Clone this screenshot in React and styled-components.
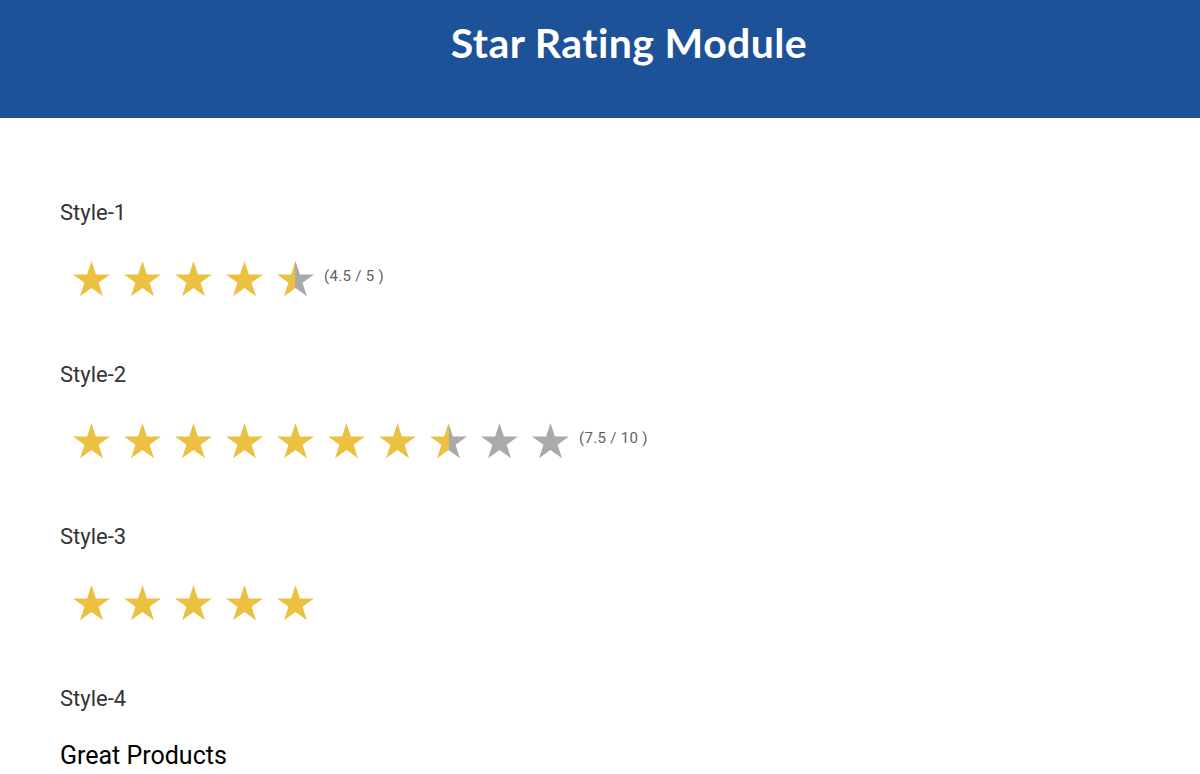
import React, { useId } from 'react';
import styled, { createGlobalStyle } from 'styled-components';

const GlobalStyle = createGlobalStyle`
  html, body {
    margin: 0;
    padding: 0;
    background: #ffffff;
  }
  body {
    font-family: Roboto, "Liberation Sans", sans-serif;
  }
`;

const YELLOW = '#ecc040';
const GREY = '#aaaaaa';

const Header = styled.header`
  height: 118px;
  background: #1d5299;
  display: flex;
  align-items: flex-start;
  justify-content: center;
  padding-left: 58px;
  box-sizing: border-box;
`;

const Title = styled.h1`
  margin: 0;
  padding-top: 17px;
  font-family: Lato, "DejaVu Sans", sans-serif;
  font-weight: 700;
  font-size: 41px;
  line-height: 52px;
  color: #ffffff;
  letter-spacing: 0.4px;
`;

const Main = styled.main`
  padding: 81px 0 0 60px;
`;

const Section = styled.section`
  padding-bottom: ${({ last }) => (last ? 0 : 64)}px;
`;

const Label = styled.h3`
  margin: 0;
  font-size: 22px;
  line-height: 28px;
  font-weight: 400;
  color: #333333;
`;

const Stars = styled.div`
  display: flex;
  align-items: center;
  gap: 14px;
  margin-top: 34px;
  padding-left: 13px;
  height: 36px;
`;

const Score = styled.span`
  margin-left: -4px;
  margin-bottom: 6px;
  font-size: 15px;
  font-weight: 400;
  color: #5f5f5f;
  letter-spacing: 0.3px;
`;

const Heading = styled.h4`
  margin: 28px 0 0;
  font-size: 25px;
  line-height: 30px;
  font-weight: 400;
  color: #000000;
`;

const starPoints = (() => {
  const cx = 18.5;
  const cy = 19.5;
  const R = 19.5;
  const r = R * 0.382;
  const pts = [];
  for (let i = 0; i < 10; i += 1) {
    const a = (Math.PI / 5) * i - Math.PI / 2;
    const rad = i % 2 === 0 ? R : r;
    pts.push(`${(cx + rad * Math.cos(a)).toFixed(2)},${(cy + rad * Math.sin(a)).toFixed(2)}`);
  }
  return pts.join(' ');
})();

function Star({ fill = 1 }) {
  const id = useId().replace(/:/g, '');
  const pct = `${Math.round(fill * 100)}%`;
  return (
    <svg width="37" height="36" viewBox="0 0 37 36" aria-hidden="true">
      <defs>
        <linearGradient id={id} x1="0" x2="1" y1="0" y2="0">
          <stop offset={pct} stopColor={YELLOW} />
          <stop offset={pct} stopColor={GREY} />
        </linearGradient>
      </defs>
      <polygon points={starPoints} fill={`url(#${id})`} />
    </svg>
  );
}

function Rating({ value, max, showScore }) {
  const items = [];
  for (let i = 0; i < max; i += 1) {
    items.push(<Star key={i} fill={Math.max(0, Math.min(1, value - i))} />);
  }
  return (
    <Stars>
      {items}
      {showScore && <Score>({value} / {max} )</Score>}
    </Stars>
  );
}

export default function App() {
  return (
    <>
      <GlobalStyle />
      <Header>
        <Title>Star Rating Module</Title>
      </Header>
      <Main>
        <Section>
          <Label>Style-1</Label>
          <Rating value={4.5} max={5} showScore />
        </Section>
        <Section>
          <Label>Style-2</Label>
          <Rating value={7.5} max={10} showScore />
        </Section>
        <Section>
          <Label>Style-3</Label>
          <Rating value={5} max={5} />
        </Section>
        <Section last>
          <Label>Style-4</Label>
          <Heading>Great Products</Heading>
        </Section>
      </Main>
    </>
  );
}
